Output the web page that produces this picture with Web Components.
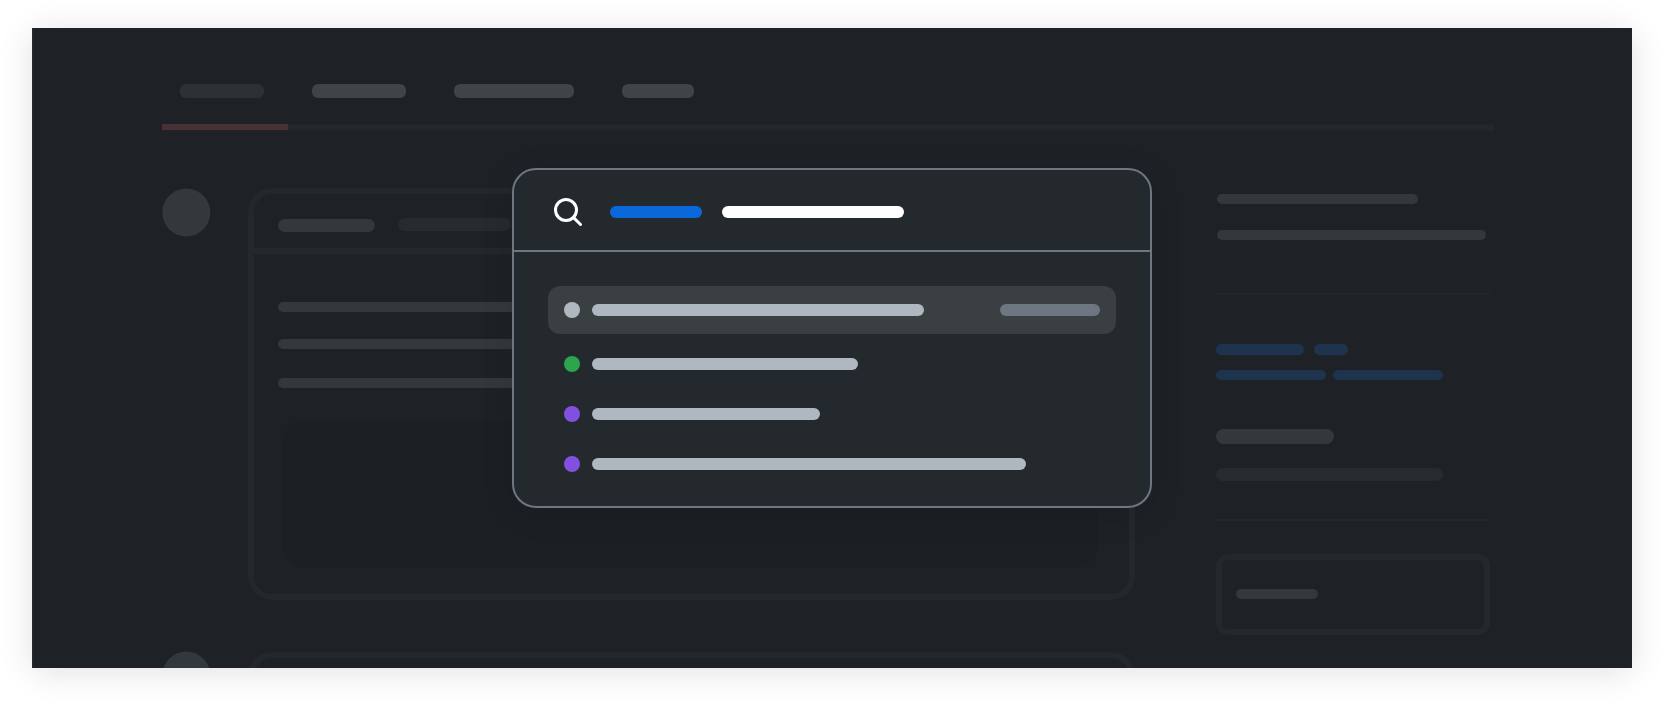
<!DOCTYPE html>
<html lang="en">
<head>
<meta charset="utf-8">
<title>Command palette</title>
<style>
html,body{margin:0;background:#fff;overflow:hidden;font-family:"Liberation Sans",sans-serif}
</style>
</head>
<body>
<app-frame>
  <tab-strip></tab-strip>
  <page-columns>
    <comment-thread slot="main"></comment-thread>
    <side-bar slot="side"></side-bar>
  </page-columns>
  <command-palette slot="overlay"></command-palette>
</app-frame>
<script>
const define = (name, html) => customElements.define(name, class extends HTMLElement {
  constructor() {
    super();
    this.attachShadow({ mode: 'open' }).innerHTML = html;
  }
});

/* Placeholder bar: w, h, r (radius) and c (colour) come from attributes. */
customElements.define('sk-bar', class extends HTMLElement {
  constructor() {
    super();
    this.attachShadow({ mode: 'open' }).innerHTML = `
      <style>:host{display:block;flex:none;width:var(--w);height:var(--h);border-radius:var(--r);background:var(--c)}</style>`;
  }
  connectedCallback() {
    const h = this.getAttribute('h') || '11';
    this.style.setProperty('--w', this.getAttribute('w') + 'px');
    this.style.setProperty('--h', h + 'px');
    this.style.setProperty('--r', (this.getAttribute('r') || h / 2) + 'px');
    this.style.setProperty('--c', this.getAttribute('c') || '#33383c');
  }
});

define('app-frame', `
  <style>
    :host{display:block;box-sizing:border-box;width:1664px;height:704px;padding:28px 32px 36px}
    .shadow{height:640px;box-shadow:0 4px 32px rgba(0,0,0,.12)}
    .frame{position:relative;box-sizing:border-box;height:640px;overflow:hidden;background:#1e2125;border-left:2px solid #22272b;padding:56px 0 0 128px}
  </style>
  <div class="shadow"><div class="frame"><slot></slot><slot name="overlay"></slot></div></div>`);

define('tab-strip', `
  <style>
    :host{display:block;width:1332px}
    .tabs{display:flex;gap:48px;padding-left:18px}
    .rule{margin-top:26px;height:7px;background:linear-gradient(#202327 0 1px,#24272b 1px 6px,#202428 6px)}
    .active{width:126px;height:6px;background:#483135}
  </style>
  <div class="tabs">
    <sk-bar w="84" h="14" r="6" c="#2c3135"></sk-bar>
    <sk-bar w="94" h="14" r="6" c="#404347"></sk-bar>
    <sk-bar w="120" h="14" r="6" c="#404347"></sk-bar>
    <sk-bar w="72" h="14" r="6" c="#404347"></sk-bar>
  </div>
  <div class="rule"><div class="active"></div></div>`);

define('page-columns', `
  <style>
    :host{display:flex;gap:81px;padding-top:57px}
    .main{width:973px}
    .side{width:274px;padding-top:6px}
  </style>
  <div class="main"><slot name="main"></slot></div>
  <div class="side"><slot name="side"></slot></div>`);

define('thread-item', `
  <style>
    :host{display:flex;gap:38px;align-items:flex-start}
    .avatar{width:48px;height:48px;border-radius:50%;background:#33383c;flex:none;transform:translate(.3px,var(--nudge,.5px))}
    .card{box-sizing:border-box;width:887px;height:412px;border:6px solid #23282c;border-radius:24px;overflow:hidden}
  </style>
  <div class="avatar"></div>
  <div class="card"><slot></slot></div>`);

define('comment-thread', `
  <style>
    :host{display:flex;flex-direction:column;gap:52px}
    .head{display:flex;gap:23px;height:54px;box-sizing:border-box;padding:25px 0 0 24px}
    .head :last-child{margin-top:-1px}
    .rule{height:6px;background:#24272b}
    .body{padding:48px 24px 0}
    .attach{width:816px;height:148px;margin:32px 0 0 4px;border-radius:24px;background:#1c1f23}
  </style>
  <thread-item>
    <div class="head"><sk-bar w="97" h="13"></sk-bar><sk-bar w="113" h="13" c="#272b2f"></sk-bar></div>
    <div class="rule"></div>
    <div class="body">
      <sk-bar w="680" h="10"></sk-bar>
      <sk-bar w="680" h="10" style="margin:27px 0 29px"></sk-bar>
      <sk-bar w="680" h="10"></sk-bar>
      <div class="attach"></div>
    </div>
  </thread-item>
  <thread-item style="--nudge:-.6px"></thread-item>`);

define('side-bar', `
  <style>
    :host{display:block}
    .rule{height:2px;background:#23272b}
    .about{display:flex;flex-direction:column;gap:26px;padding:0 0 53px 1px}
    .links{display:grid;gap:15px;padding:49px 0 49px}
    .row{display:flex;gap:10px}
    .row.b{gap:7px}
    .meta{display:flex;flex-direction:column;gap:24px;padding-bottom:38px}
    .box{margin-top:33px;box-sizing:border-box;height:81px;border:6px solid #23282c;border-radius:12px;padding:29px 14px 0}
  </style>
  <div class="about"><sk-bar w="201" h="10"></sk-bar><sk-bar w="269" h="10"></sk-bar></div>
  <div class="rule"></div>
  <div class="links">
    <div class="row"><sk-bar w="88" c="#1e334e"></sk-bar><sk-bar w="34" c="#1e334e"></sk-bar></div>
    <div class="row b"><sk-bar w="110" h="10" c="#1e334e"></sk-bar><sk-bar w="110" h="10" c="#1e334e"></sk-bar></div>
  </div>
  <div class="meta"><sk-bar w="118" h="15"></sk-bar><sk-bar w="227" h="13" c="#272b2f"></sk-bar></div>
  <div class="rule"></div>
  <div class="box"><sk-bar w="82" h="10"></sk-bar></div>`);

define('palette-item', `
  <style>
    :host{display:flex;align-items:center;gap:12px;box-sizing:border-box;height:48px;padding:0 16px;border-radius:12px}
    :host([selected]){background:#3a3f42}
    .dot{width:16px;height:16px;border-radius:50%;background:var(--dot,#afb8c1)}
    ::slotted(:last-child:not(:first-child)){margin-left:auto}
  </style>
  <span class="dot"></span><slot></slot>`);

define('command-palette', `
  <style>
    /* Floats over the dimmed page. */
    :host{position:absolute;left:478px;top:140px;box-sizing:border-box;width:640px;height:340px;border:2px solid #6e7681;border-radius:24px;background:#24292d;overflow:hidden;box-shadow:0 6px 32px rgba(0,0,0,.1)}
    .query{display:flex;align-items:center;box-sizing:border-box;height:82px;padding:4px 0 0 38px;border-bottom:2px solid #6e7681}
    svg{width:32px;height:32px;flex:none;margin-right:26px}
    .blue{margin-right:20px}
    .list{padding:34px 34px 0}
    .list palette-item{margin-bottom:2px}
    .list palette-item:first-child{margin-bottom:6px}
  </style>
  <div class="query">
    <svg viewBox="0 0 32 32" fill="none" stroke="#fff" stroke-width="3" stroke-linecap="round"><circle cx="14" cy="14" r="10.5"/><path d="M21.6 21.6 28.5 28.5"/></svg>
    <sk-bar class="blue" w="92" h="12" c="#0969da"></sk-bar><sk-bar w="182" h="12" c="#fff"></sk-bar>
  </div>
  <div class="list">
    <palette-item selected><sk-bar w="332" h="12" c="#afb8c1"></sk-bar><sk-bar w="100" h="12" c="#6e7681"></sk-bar></palette-item>
    <palette-item style="--dot:#2da44e"><sk-bar w="266" h="12" c="#afb8c1"></sk-bar></palette-item>
    <palette-item style="--dot:#8250df"><sk-bar w="228" h="12" c="#afb8c1"></sk-bar></palette-item>
    <palette-item style="--dot:#8250df"><sk-bar w="434" h="12" c="#afb8c1"></sk-bar></palette-item>
  </div>`);
</script>
</body>
</html>
